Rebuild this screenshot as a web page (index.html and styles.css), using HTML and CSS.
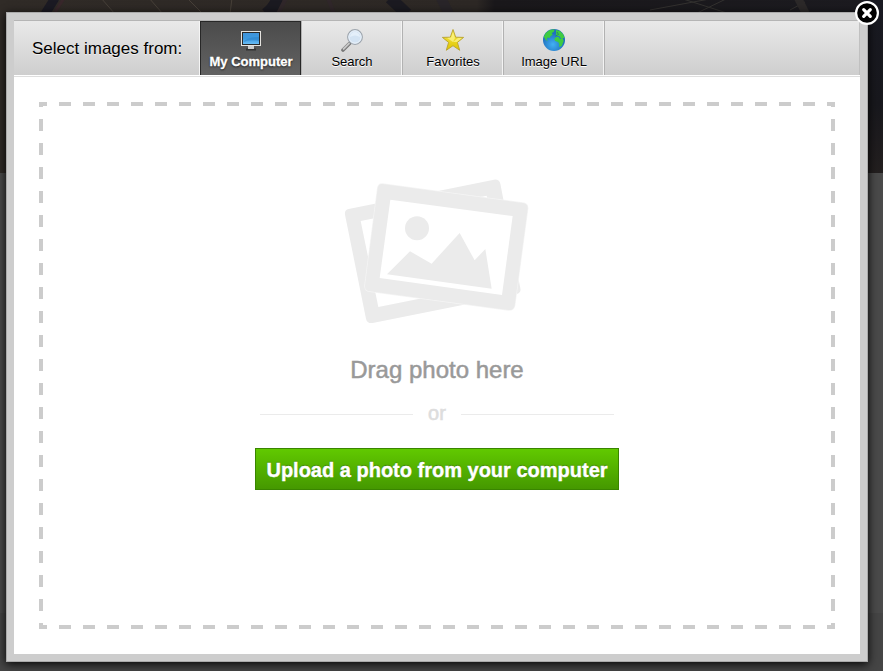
FILE: index.html
```
<!DOCTYPE html>
<html lang="en">
<head>
<meta charset="utf-8">
<title>Select images</title>
<link rel="stylesheet" href="styles.css">
</head>
<body>
<svg class="backdrop" width="883" height="671" viewBox="0 0 883 671" aria-hidden="true">
  <defs>
    <linearGradient id="photo"><stop offset="0" stop-color="#302b27"/><stop offset=".54" stop-color="#2d2825"/><stop offset=".56" stop-color="#1a181b"/><stop offset="1" stop-color="#1c1b20"/></linearGradient>
    <linearGradient id="photoDown" x2="0" y2="1"><stop offset="0" stop-color="#191a22"/><stop offset=".6" stop-color="#18181d"/><stop offset="1" stop-color="#231f1f"/></linearGradient>
  </defs>
  <rect width="883" height="671" fill="#4a4a4a"/>
  <rect y="613" width="883" height="58" fill="#454545"/>
  <rect width="883" height="173" fill="url(#photo)"/>
  <rect x="862" width="21" height="173" fill="url(#photoDown)"/>
  <g fill="none">
    <path d="M55-2 45 14" stroke="#1b1a23" stroke-width="9"/>
    <path d="M64-2 54 14" stroke="#38272b" stroke-width="3"/>
    <path d="M277-2Q276 6 266 14M390-2 407 14" stroke="#1b1a21" stroke-width="12"/>
    <path d="M286-2 278 14M328-2 334 14" stroke="#30272a" stroke-width="4"/>
    <path d="M101-2 115 14M149-2 163 14M187-2 203 14M232-2 230 14" stroke="#484039"/>
    <path d="M441-2 449 14" stroke="#292529" stroke-width="10"/>
    <path d="M650 10 715-2M680-2 730 14M728-2 695 14M790 10 805 2" stroke="#343230"/>
    <path d="M798-2 806 14" stroke="#2c2929" stroke-width="8"/>
  </g>
</svg>
<div class="modal">
  <div class="panel">
    <div class="toolbar">
      <div class="title">Select images from:</div>
      <div class="tab active">
        <svg width="24" height="24" viewBox="0 0 24 24"><defs><linearGradient id="screen" x2="0" y2="1"><stop stop-color="#3f94db"/><stop offset=".5" stop-color="#3c99df"/><stop offset="1" stop-color="#68bcf5"/></linearGradient></defs><path d="M7 20.500h10v2H7z" fill="#333"/><path d="M9 17h6v4H9z" fill="#ccc"/><rect x="2" y="3" width="20" height="15" fill="#e5e3df"/><rect x="3" y="4" width="18" height="13" fill="#292929"/><rect x="4" y="5" width="16" height="11" fill="url(#screen)"/><path d="M4 14Q9 9 20 9v4Q11 11 4 14" fill="#2d83cc" opacity=".6"/></svg>
        <span>My Computer</span>
      </div>
      <div class="tab">
        <svg width="24" height="24" viewBox="0 0 24 24"><path d="m9.500 15.500-6.500 6.500" stroke="#777" stroke-width="3.600" stroke-linecap="round"/><path d="m9.500 15-6.500 6.500" stroke="#c7c7c7" stroke-width="1.800"/><circle cx="15" cy="9" r="7.300" fill="#d3e3f3" stroke="#9ea6ae" stroke-width="1.300"/><circle cx="15" cy="9" r="6.200" fill="none" stroke="#edf4fb"/><path d="M10 9a5 5 0 0 1 10 0Q15 6 10 9" fill="#e4effa"/></svg>
        <span>Search</span>
      </div>
      <div class="tab">
        <svg width="24" height="24" viewBox="0 0 24 24"><defs><linearGradient id="gold" x2="0" y2="1"><stop stop-color="#f7ea4b"/><stop offset="1" stop-color="#dfc400"/></linearGradient></defs><path d="m12 1.500 2.700 7.700 7.900.2-6.200 5 2.300 7.900-6.700-4.600-6.700 4.600 2.300-7.900-6.200-5 7.900-.2z" fill="url(#gold)" stroke="#b8a12d" stroke-width=".9"/><path d="m12 4 2 6-2 4-6-4 4-.5zM12 14l5-4 4 0-5 4z" fill="#fff99a" opacity=".65"/></svg>
        <span>Favorites</span>
      </div>
      <div class="tab">
        <svg width="24" height="24" viewBox="0 0 24 24"><defs><radialGradient id="sea" cx=".45" cy=".7"><stop stop-color="#42b1f4"/><stop offset="1" stop-color="#1f70be"/></radialGradient></defs><circle cx="12" cy="12" r="11" fill="url(#sea)"/><path d="m1.700 9 2-4 4-3 5-.7-1 2.700-2 1 1 2-2 1-1 2-2-.5-1 1.500 1 2-2-1-1-2zM14 2l4 1 3 3 1.700 4-2 0 1 3-2 5-2.500 1 0-3-1-2-3-1-1-2 2-2 2.500 0 1 2 1.500 0-2-3-3 0z" fill="#3ecb42"/><path d="m15 4 1.500 2.500L13.500 8" fill="none" stroke="#258b65"/></svg>
        <span>Image URL</span>
      </div>
      <div class="toolbar-end"></div>
    </div>
    <div class="content">
      <div class="dropzone">
        <svg class="photos" width="210" height="165" viewBox="0 0 630 495">
          <path fill="#ebebeb" fill-rule="evenodd" d="M56 117 492 29Q507 27 511 41L571 355Q574 368 561 372L128 459Q111 461 108 446L45 134Q43 120 56 117ZM92 153 145 411 523 335 470 77Z"/>
          <path fill="#f5f5f5" d="M158 40 578 97Q597 99 595 117L556 407Q552 424 534 422L119 366Q101 363 103 345L141 54Q144 38 158 40Z"/>
          <path fill="#ebebeb" d="M158 42 578 99Q595 101 593 117L554 407Q550 422 534 420L119 364Q103 361 105 345L143 54Q146 40 158 42Z"/>
          <path fill="#fff" d="M181 89 149 324 516 375 548 138Z"/>
          <circle cx="261" cy="175" r="36" fill="#ebebeb"/>
          <path d="m171 313 69-69 65 37 84-92 45 82 32-34 19 119z" fill="#ebebeb"/>
        </svg>
        <div class="drag">Drag photo here</div>
        <div class="or">or</div>
        <div class="upload">Upload a photo from your computer</div>
      </div>
    </div>
  </div>
  <svg class="close" width="26" height="26" viewBox="0 0 26 26"><circle cx="13" cy="13" r="10.900" fill="#000" stroke="#fff" stroke-width="2.200"/><path d="m9.700 9.700 6.600 6.600m0-6.600-6.600 6.600" stroke="#fff" stroke-width="3.200" stroke-linecap="round"/></svg>
</div>
</body>
</html>
```
FILE: styles.css
```
* { box-sizing: border-box; }
body { margin: 0; height: 671px; overflow: hidden; background: #4a4a4a; font-family: "Liberation Sans", Arial, sans-serif; color: #000; }
.backdrop { position: absolute; top: 0; left: 0; z-index: -1; }
.modal { position: relative; width: 862px; height: 650px; margin: 12px 0 0 6px; padding: 7px; border: 1px solid #aaa; background: #cdcdcd; box-shadow: 0 2px 9px rgba(0,0,0,.95); }
.panel { height: 634px; background: #fff; }
.toolbar { display: flex; height: 57px; border-top: 1px solid #b5b5b5; border-bottom: 1px solid #dedede; background: linear-gradient(#e9e9e9, #cecece 54px, #fff 54px); }
.title { width: 186px; height: 54px; padding-left: 18px; border-right: 1px solid #f5f5f5; font-size: 17px; line-height: 56px; white-space: nowrap; text-shadow: 0 1px 0 #eee; }
.tab { display: flex; flex-direction: column; align-items: center; width: 101px; height: 54px; padding-top: 7px; border-left: 1px solid #b2b2b2; border-right: 1px solid #f3f3f3; font-size: 13px; line-height: 16px; white-space: nowrap; text-shadow: 0 1px 0 #fff; }
.tab svg { display: block; flex: none; margin-bottom: 2px; }
.tab span { padding-left: 1px; }
.tab.active { border: 1px solid #272727; border-bottom: 0; padding-top: 6px; background: linear-gradient(#4b4b4b, #626262); color: #fff; font-weight: bold; text-shadow: 0 1px 2px #111; -webkit-text-stroke: .3px #fff; }
.toolbar-end { flex: 1; height: 54px; border-left: 1px solid #b2b2b2; border-right: 1px solid #c0c0c0; }
.content { padding: 25px; }
.dropzone {
  display: flex; flex-direction: column; align-items: center; width: 796px; height: 527px; padding-top: 68px;
  --h: repeating-linear-gradient(90deg, #ccc 0 8px, transparent 8px 20px, #ccc 20px 24px);
  --v: repeating-linear-gradient(#ccc 0 5px, transparent 5px 17px, #ccc 17px 24px);
  background: var(--h) top / 100% 4px no-repeat, var(--h) bottom / 100% 4px no-repeat, var(--v) left / 4px 100% no-repeat, var(--v) right / 4px 100% no-repeat;
}
.photos { display: block; flex: none; margin-right: 4px; }
.drag { margin-top: 21px; color: #999; font-size: 24px; line-height: 28px; -webkit-text-stroke: .5px #999; white-space: nowrap; }
.or { display: flex; align-items: center; gap: 15px; width: 354px; height: 24px; margin-top: 17px; font-size: 20px; line-height: 24px; color: #ddd; -webkit-text-stroke: .6px #ddd; }
.or::before, .or::after { content: ""; flex: 1; height: 1px; margin-top: 3px; background: #ebebeb; }
.upload { width: 364px; height: 42px; margin-top: 23px; border: 1px solid #398500; background: linear-gradient(#61c900, #459800); color: #fff; font-size: 20px; font-weight: bold; line-height: 42px; text-align: center; white-space: nowrap; text-shadow: 0 -1px 1px rgba(0,0,0,.3); -webkit-text-stroke: .4px #fff; }
.close { position: absolute; top: -13px; right: -13px; }
```
